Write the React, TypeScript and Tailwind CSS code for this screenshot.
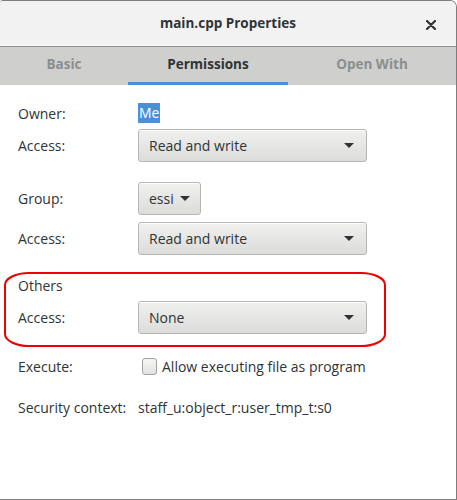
import React from 'react';

// Combobox with a small triangle on the right
function Combo({ value, wide = true }: { value: string; wide?: boolean }) {
  return (
    <div
      className={`flex items-center h-[33px] rounded-[3px] border border-[#b6b6b3] bg-gradient-to-b from-[#f0f0ee] to-[#dcdcda] shadow-[inset_0_1px_0_#ffffff] ${
        wide ? 'w-[229px] pl-[10px] pr-[12px] justify-between' : 'w-[63px] pl-[10px] pr-[8px] gap-[6px]'
      }`}
    >
      <span>{value}</span>
      <svg width="10" height="5" viewBox="0 0 10 5">
        <path d="M0 0 L10 0 L5 5 Z" fill="#2e3436" />
      </svg>
    </div>
  );
}

export default function App() {
  const tabs = [
    { name: 'Basic', w: 'w-[128px]', active: false },
    { name: 'Permissions', w: 'w-[160px]', active: true },
    { name: 'Open With', w: 'flex-1', active: false }
  ];

  return (
    <div
      className="w-[457px] h-[500px] bg-white relative flex flex-col border-t border-r border-b border-[#7d7d7d] rounded-tr-[7px] rounded-tl-[3px] overflow-hidden text-[14px] text-[#2e3436]"
      style={{ fontFamily: '"Open Sans", "Noto Sans", sans-serif' }}
    >
      {/* 标题栏 */}
      <header className="h-[45px] shrink-0 bg-[#f2f2f2] border-b border-[#fafafa] relative flex items-center justify-center">
        <span className="font-bold text-[13.5px]">main.cpp Properties</span>
        <svg className="absolute right-[20px] top-[19px]" width="10" height="10" viewBox="0 0 10 10">
          <path d="M1 1 L9 9 M9 1 L1 9" stroke="#2e3436" strokeWidth="2.2" strokeLinecap="round" />
        </svg>
      </header>

      {/* 选项卡 */}
      <nav className="h-[39px] shrink-0 bg-[#cfcfcd] border-t border-[#8f8f8f] flex">
        {tabs.map((t) => (
          <div
            key={t.name}
            className={`${t.w} flex items-center justify-center font-bold text-[13.5px] border-b-[3px] ${
              t.active ? 'border-[#4a90d9] text-[#2e3436]' : 'border-transparent text-[#8b8e8f]'
            }`}
          >
            {t.name}
          </div>
        ))}
      </nav>

      {/* 内容 */}
      <main className="flex-1 flex flex-col pl-[18px]">
        <div className="mt-[18px] h-[20px] flex items-center">
          <span className="w-[120px]">Owner:</span>
          <span className="bg-[#4a90d9] text-white h-[20px] px-[1px] leading-[20px]">Me</span>
        </div>
        <div className="mt-[6px] flex items-center">
          <span className="w-[120px]">Access:</span>
          <Combo value="Read and write" />
        </div>

        <div className="mt-[20px] flex items-center">
          <span className="w-[120px]">Group:</span>
          <Combo value="essi" wide={false} />
        </div>
        <div className="mt-[7px] flex items-center">
          <span className="w-[120px]">Access:</span>
          <Combo value="Read and write" />
        </div>

        <div className="mt-[21px] h-[18px] flex items-center">Others</div>
        <div className="mt-[7px] flex items-center">
          <span className="w-[120px]">Access:</span>
          <Combo value="None" />
        </div>

        <div className="mt-[23px] h-[18px] flex items-center">
          <span className="w-[124px]">Execute:</span>
          <span className="w-[15px] h-[17px] rounded-[3px] border border-[#a1a1a1] bg-gradient-to-b from-[#f6f6f5] to-[#e2e2e0] mr-[5px]" />
          <span>Allow executing file as program</span>
        </div>

        <div className="mt-[23px] h-[18px] flex items-center">
          <span className="w-[120px]">Security context:</span>
          <span>staff_u:object_r:user_tmp_t:s0</span>
        </div>
      </main>

      {/* 红色标注 */}
      <svg className="absolute left-0 top-0 pointer-events-none" width="457" height="500">
        <rect x="5" y="272" width="380" height="73" rx="24" ry="12" fill="none" stroke="#f00000" strokeWidth="2" />
      </svg>
    </div>
  );
}
